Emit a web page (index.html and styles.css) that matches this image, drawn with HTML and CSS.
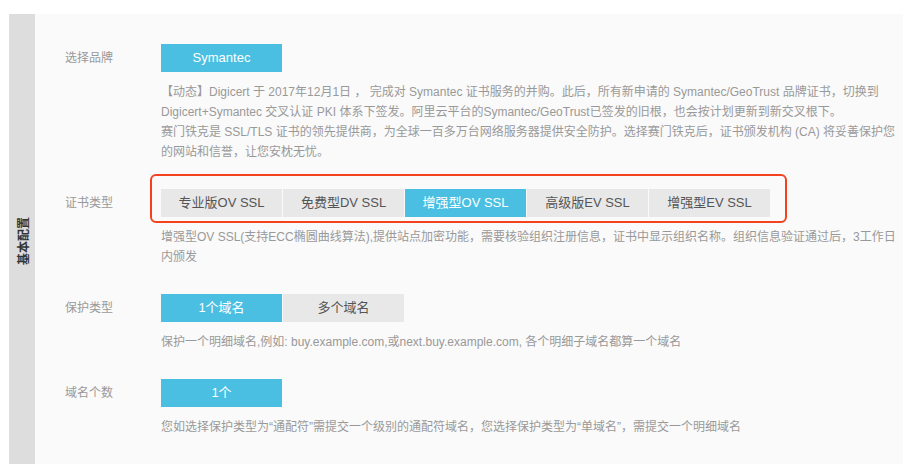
FILE: index.html
```html
<!DOCTYPE html>
<html lang='zh-CN'>

<head>
    <meta charset='UTF-8'>
    <meta name='viewport' content='width=device-width, initial-scale=1.0'>
    <title>基本配置</title>
    <link rel="stylesheet" href="styles.css">
</head>

<body>
    <div class='panel'>
        <div class='side'>
            <span class='side-title'>基本配置</span>
        </div>

        <div class='content'>
            <div class='row'>
                <div class='label'>选择品牌</div>
                <div>
                    <div class='opts'>
                        <div class='opt on'>Symantec</div>
                    </div>
                    <div class='desc'>
                        <p>【动态】Digicert 于 2017年12月1日 ， 完成对 Symantec 证书服务的并购。此后，所有新申请的 Symantec/GeoTrust 品牌证书，切换到 Digicert+Symantec 交叉认证 PKI 体系下签发。阿里云平台的Symantec/GeoTrust已签发的旧根，也会按计划更新到新交叉根下。</p>
                        <p>赛门铁克是 SSL/TLS 证书的领先提供商，为全球一百多万台网络服务器提供安全防护。选择赛门铁克后，证书颁发机构 (CA) 将妥善保护您的网站和信誉，让您安枕无忧。</p>
                    </div>
                </div>
            </div>

            <div class='row'>
                <div class='label'>证书类型</div>
                <div>
                    <div class='opts marked'>
                        <div class='opt'>专业版OV SSL</div>
                        <div class='opt'>免费型DV SSL</div>
                        <div class='opt on'>增强型OV SSL</div>
                        <div class='opt'>高级版EV SSL</div>
                        <div class='opt'>增强型EV SSL</div>
                    </div>
                    <div class='desc'>
                        <p>增强型OV SSL(支持ECC椭圆曲线算法),提供站点加密功能，需要核验组织注册信息，证书中显示组织名称。组织信息验证通过后，3工作日内颁发</p>
                    </div>
                </div>
            </div>

            <div class='row'>
                <div class='label'>保护类型</div>
                <div>
                    <div class='opts'>
                        <div class='opt on'>1个域名</div>
                        <div class='opt'>多个域名</div>
                    </div>
                    <div class='desc'>
                        <p>保护一个明细域名,例如: buy.example.com,或next.buy.example.com, 各个明细子域名都算一个域名</p>
                    </div>
                </div>
            </div>

            <div class='row'>
                <div class='label'>域名个数</div>
                <div>
                    <div class='opts'>
                        <div class='opt on'>1个</div>
                    </div>
                    <div class='desc'>
                        <p>您如选择保护类型为“通配符”需提交一个级别的通配符域名，您选择保护类型为“单域名”，需提交一个明细域名</p>
                    </div>
                </div>
            </div>
        </div>
    </div>
</body>

</html>
```

FILE: styles.css
```css
body {
    font-family: "Liberation Sans", "Noto Sans CJK SC", sans-serif;
    margin: 0;
    padding: 0;
    background-color: #fff;
}

.panel {
    display: flex;
    width: 894px;
    margin: 14px 0 0 9px;
    background-color: #fafafa;
}

.side {
    width: 26px;
    background-color: #dddddd;
    display: flex;
    justify-content: center;
    align-items: center;
}

.side-title {
    writing-mode: vertical-rl;
    text-orientation: sideways;
    transform: rotate(180deg);
    font-size: 12px;
    font-weight: bold;
    color: #333;
    margin-top: 4px;
}

.content {
    flex: 1;
    padding: 30px 0 0 30px;
}

.row {
    display: grid;
    grid-template-columns: 96px 1fr;
    margin-bottom: 27px;
}

.label {
    font-size: 12px;
    line-height: 28px;
    color: #999;
}

.opts {
    display: flex;
    gap: 1px;
    position: relative;
}

.opt {
    width: 121px;
    height: 28px;
    line-height: 28px;
    text-align: center;
    font-size: 13px;
    color: #555;
    background-color: #e8e8e8;
}

.opt.on {
    color: #fff;
    background-color: #4abfe2;
}

/* red annotation round the cert type buttons */
.opts.marked::before {
    content: '';
    position: absolute;
    left: -11px;
    top: -15px;
    width: 633px;
    height: 45px;
    border: 2px solid #f4421f;
    border-radius: 6px;
}

.desc {
    margin-top: 10px;
    max-width: 746px;
    font-size: 12px;
    line-height: 20px;
    color: #999;
}

.desc p {
    margin: 0;
}
```
